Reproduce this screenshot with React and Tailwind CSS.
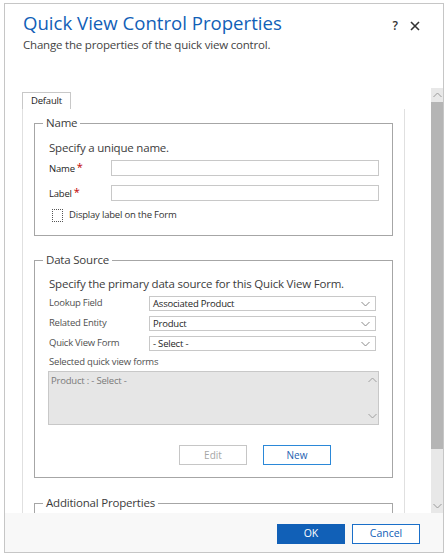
const FONT = "font-['Open_Sans','Liberation_Sans',sans-serif]"

function Chevron({ up, className }) {
  return (
    <svg width="9" height="6" viewBox="0 0 9 6" className={className}>
      <polyline
        points={up ? '0.5,5 4.5,1 8.5,5' : '0.5,1 4.5,5 8.5,1'}
        fill="none"
        stroke="currentColor"
        strokeWidth="1"
      />
    </svg>
  )
}

function Select({ label, value }) {
  return (
    <div className="flex items-center h-[15px]">
      <div className="w-[100px] text-[9.5px] tracking-[-0.25px] text-[#505050]">{label}</div>
      <div className="w-[227px] h-[15px] border border-[#c8c8c8] flex items-center pl-[3px] pr-[5px]">
        <span className="flex-1 text-[9.5px] tracking-[-0.2px] text-[#1e1e1e] leading-none">{value}</span>
        <Chevron className="text-[#8a8a8a]" />
      </div>
    </div>
  )
}

function TextRow({ label }) {
  return (
    <div className="flex items-center h-[16px]">
      <div className="w-[62px] text-[9.5px] tracking-[-0.2px] text-[#1e1e1e]">
        {label}
        <span className="text-[#c00000] text-[11px] ml-[2px] relative top-[-1px]">*</span>
      </div>
      <div className="w-[268px] h-[16px] border border-[#c8c8c8] bg-white" />
    </div>
  )
}

function Group({ title, children, className = '' }) {
  return (
    <fieldset className={`border border-[#a6a6a6] px-[8px] ${className}`}>
      <legend className="px-[3px] text-[11.5px] tracking-[-0.2px] leading-[18px] text-[#3c3c3c]">{title}</legend>
      <div className="pl-[6px]">{children}</div>
    </fieldset>
  )
}

export default function App() {
  return (
    <div className={`pt-[3px] pl-1 ${FONT}`}>
      <div className="w-[440px] h-[550px] border border-[#c6c6c6] bg-white flex flex-col">
        {/* Header */}
        <div className="h-[84px] pl-[18px] pr-[23px] pt-[6px] flex">
          <div className="flex-1">
            <div className="text-[18.6px] leading-[25px] text-[#1160b7]">Quick View Control Properties</div>
            <div className="text-[11.5px] tracking-[-0.2px] leading-[16px] text-[#444444] mt-[2px]">
              Change the properties of the quick view control.
            </div>
          </div>
          <div className="flex items-start gap-[12px] pt-[10px] text-[#333]">
            <span className="text-[12px] font-semibold leading-none">?</span>
            <svg width="10" height="10" viewBox="0 0 10 10" className="mt-[1px]">
              <path d="M1 1L9 9M9 1L1 9" stroke="#333" strokeWidth="1.6" />
            </svg>
          </div>
        </div>

        {/* Body */}
        <div className="h-[425px] flex">
          <div className="flex-1 overflow-hidden pt-[4px] pl-[17px]">
            <div className="w-[49px] h-[17px] border border-b-0 border-[#c8c8c8] bg-white flex items-center justify-center text-[9.5px] tracking-[-0.2px] text-[#222]">
              Default
            </div>
            <div className="w-[383px] h-[420px] border-l border-r border-[#e0e0e0] pl-[11px] pt-[5px]">
              <Group title="Name" className="w-[359px] h-[122px]">
                <div className="text-[11.5px] tracking-[-0.2px] text-[#3c3c3c] leading-[16px] mt-[8px]">
                  Specify a unique name.
                </div>
                <div className="mt-[4px] flex flex-col gap-[9px]">
                  <TextRow label="Name" />
                  <TextRow label="Label" />
                </div>
                <div className="mt-[7px] flex items-center ml-[3px]">
                  <div className="w-[11px] h-[13px] border border-dotted border-[#555]" />
                  <span className="ml-[6px] text-[9.5px] tracking-[-0.2px] text-[#333]">Display label on the Form</span>
                </div>
              </Group>

              <Group title="Data Source" className="w-[359px] h-[227px] mt-[15px]">
                <div className="text-[11.5px] tracking-[-0.2px] text-[#3c3c3c] leading-[16px] mt-[7px]">
                  Specify the primary data source for this Quick View Form.
                </div>
                <div className="mt-[4px] flex flex-col gap-[5px]">
                  <Select label="Lookup Field" value="Associated Product" />
                  <Select label="Related Entity" value="Product" />
                  <Select label="Quick View Form" value="- Select -" />
                </div>
                <div className="mt-[4px] text-[9.5px] tracking-[-0.2px] text-[#505050] leading-[14px]">
                  Selected quick view forms
                </div>
                <div className="mt-[2px] ml-[-1px] w-[331px] h-[54px] border border-[#c8c8c8] bg-[#e6e6e6] flex">
                  <div className="flex-1 pl-[2px] pt-[2px] text-[9.5px] tracking-[-0.2px] text-[#7a7a7a]">
                    Product : - Select -
                  </div>
                  <div className="w-[12px] flex flex-col justify-between items-center py-[5px] text-[#a0a0a0]">
                    <Chevron up />
                    <Chevron />
                  </div>
                </div>
                <div className="mt-[20px] flex gap-[16px] pl-[130px]">
                  <button className="w-[68px] h-[20px] border border-[#c6c6c6] text-[10px] text-[#a6a6a6] bg-white">
                    Edit
                  </button>
                  <button className="w-[68px] h-[20px] border border-[#2b88d8] text-[10px] text-[#2360b0] bg-white">
                    New
                  </button>
                </div>
              </Group>

              <Group title="Additional Properties" className="w-[359px] h-[60px] mt-[16px]">
                <div />
              </Group>
            </div>
          </div>

          {/* Scrollbar */}
          <div className="w-[12px] flex flex-col bg-[#e8e8e8]">
            <div className="h-[14px] flex items-center justify-center text-[#9a9a9a]">
              <Chevron up />
            </div>
            <div className="h-[347px] bg-[#b5b5b5]" />
            <div className="flex-1 flex items-end justify-center pb-[4px] text-[#9a9a9a]">
              <Chevron />
            </div>
          </div>
        </div>

        {/* Footer */}
        <div className="flex-1 bg-[#f8f8f8] flex justify-end items-center gap-[7px] pr-[23px] pt-[2px]">
          <button className="w-[68px] h-[20px] bg-[#1160b7] text-white text-[10.5px]">OK</button>
          <button className="w-[68px] h-[20px] border border-[#1a6fc9] bg-white text-[#1160b7] text-[10.5px]">
            Cancel
          </button>
        </div>
      </div>
    </div>
  )
}
